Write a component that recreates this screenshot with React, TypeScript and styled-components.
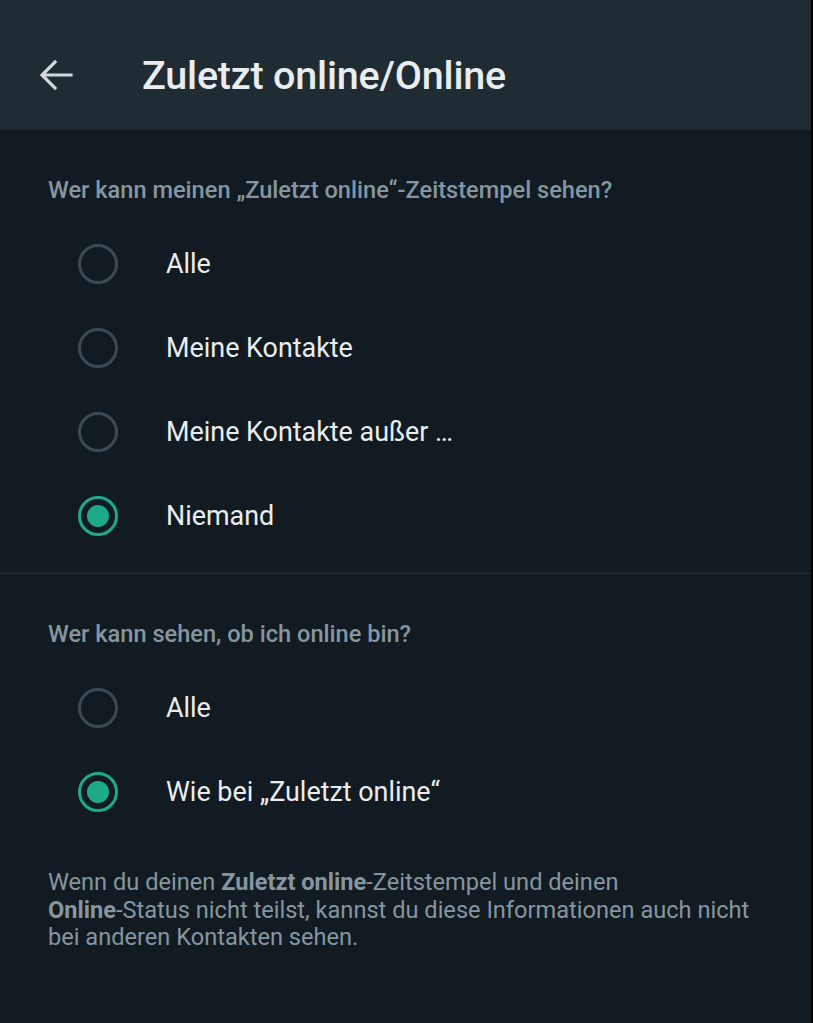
import React, { useState } from "react";
import styled, { createGlobalStyle } from "styled-components";

const GlobalStyle = createGlobalStyle`
  html, body {
    margin: 0;
    padding: 0;
    background: #000000;
  }
  body {
    font-family: Roboto, "Noto Sans", "Liberation Sans", sans-serif;
  }
`;

const Screen = styled.div`
  width: 811px;
  min-height: 1023px;
  background: #111b21;
`;

const TopBar = styled.header`
  display: flex;
  align-items: center;
  height: 130px;
  padding: 20px 0 0 38px;
  box-sizing: border-box;
  background: #202c33;
`;

const BackButton = styled.button`
  display: flex;
  align-items: center;
  justify-content: center;
  width: 36px;
  height: 36px;
  padding: 0;
  margin-right: 68px;
  border: none;
  background: none;
  color: #d1d7db;
  cursor: pointer;
`;

const Title = styled.h1`
  margin: 0;
  font-size: 39.5px;
  font-weight: 500;
  color: #e9edef;
  letter-spacing: -0.2px;
`;

const Section = styled.section<{ divided?: boolean }>`
  padding: ${(p) => (p.divided ? "46px 0 15px" : "46px 0 35px")};
  border-bottom: ${(p) => (p.divided ? "1px solid #222d34" : "none")};
`;

const SectionLabel = styled.div`
  padding: 0 48px;
  margin-bottom: 18px;
  font-size: 23.6px;
  line-height: 28px;
  font-weight: 500;
  color: #8696a0;
`;

const OptionRow = styled.label`
  display: flex;
  align-items: center;
  height: 84px;
  padding-left: 78px;
  cursor: pointer;
`;

const RadioRing = styled.span<{ checked: boolean }>`
  display: flex;
  align-items: center;
  justify-content: center;
  width: 40px;
  height: 40px;
  box-sizing: border-box;
  border-radius: 50%;
  border: 3.5px solid ${(p) => (p.checked ? "#1daa88" : "#3b4a54")};
  margin-right: 48px;
  flex-shrink: 0;
`;

const RadioDot = styled.span`
  width: 22px;
  height: 22px;
  border-radius: 50%;
  background: #1daa88;
`;

const OptionText = styled.span`
  font-size: 26.9px;
  color: #e9edef;
`;

const Footnote = styled.p`
  margin: 0;
  padding: 0 48px;
  font-size: 23.6px;
  line-height: 27.5px;
  color: #8696a0;

  strong {
    font-weight: 700;
    color: #8696a0;
  }
`;

const lastSeenOptions = ["Alle", "Meine Kontakte", "Meine Kontakte außer …", "Niemand"];
const onlineOptions = ["Alle", "Wie bei „Zuletzt online“"];

const RadioGroup = ({
  options,
  value,
  onChange,
}: {
  options: string[];
  value: string;
  onChange: (v: string) => void;
}) => (
  <div>
    {options.map((opt) => (
      <OptionRow key={opt} onClick={() => onChange(opt)}>
        <RadioRing checked={value === opt}>{value === opt && <RadioDot />}</RadioRing>
        <OptionText>{opt}</OptionText>
      </OptionRow>
    ))}
  </div>
);

const App = () => {
  const [lastSeen, setLastSeen] = useState("Niemand");
  const [online, setOnline] = useState("Wie bei „Zuletzt online“");

  return (
    <>
      <GlobalStyle />
      <Screen>
        <TopBar>
          <BackButton aria-label="Zurück">
            <svg width="34" height="30" viewBox="0 0 34 30" fill="none">
              <path
                d="M32 15H4M16 2L3 15l13 13"
                stroke="currentColor"
                strokeWidth="3.2"
                strokeLinecap="square"
              />
            </svg>
          </BackButton>
          <Title>Zuletzt online/Online</Title>
        </TopBar>

        <Section divided>
          <SectionLabel>Wer kann meinen „Zuletzt online“-Zeitstempel sehen?</SectionLabel>
          <RadioGroup options={lastSeenOptions} value={lastSeen} onChange={setLastSeen} />
        </Section>

        <Section>
          <SectionLabel>Wer kann sehen, ob ich online bin?</SectionLabel>
          <RadioGroup options={onlineOptions} value={online} onChange={setOnline} />
        </Section>

        <Footnote>
          Wenn du deinen <strong>Zuletzt online</strong>-Zeitstempel und deinen
          <br />
          <strong>Online</strong>-Status nicht teilst, kannst du diese Informationen auch nicht
          <br />
          bei anderen Kontakten sehen.
        </Footnote>
      </Screen>
    </>
  );
};

export default App;
